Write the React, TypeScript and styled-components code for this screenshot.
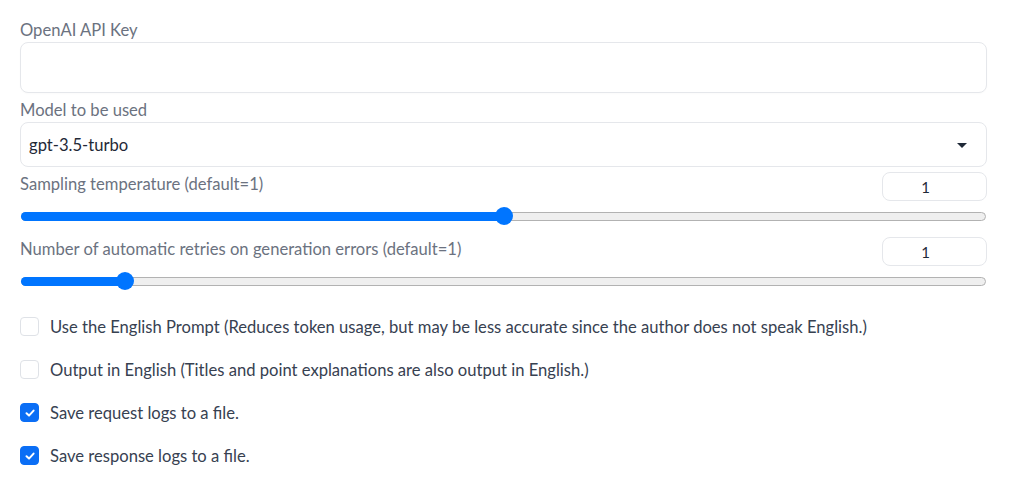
import React from "react";
import styled, { createGlobalStyle } from "styled-components";

const Global = createGlobalStyle`
  html, body { margin: 0; padding: 0; background: #ffffff; }
  body { font-family: "Lato", "Noto Sans", sans-serif; -webkit-font-smoothing: antialiased; }
  * { box-sizing: border-box; }
`;

const Page = styled.div`
  display: flex;
  flex-direction: column;
  padding: 20px 28px 0 20px;
  width: 1015px;
  height: 497px;
  overflow: hidden;
`;

const Field = styled.div<{ $mb?: number }>`
  display: flex;
  flex-direction: column;
  gap: 2px;
  margin-bottom: ${(p) => p.$mb ?? 0}px;
`;

const Label = styled.span`
  font-size: 16.6px;
  line-height: 20px;
  color: #6b7280;
`;

const TextBox = styled.div`
  height: 51px;
  border: 1px solid #e5e7eb;
  border-radius: 8px;
  background: #fff;
  box-shadow: 0 1px 2px rgba(0, 0, 0, 0.02);
`;

const Select = styled.div`
  height: 45px;
  border: 1px solid #e5e7eb;
  border-radius: 8px;
  background: #fff;
  display: flex;
  align-items: center;
  justify-content: space-between;
  padding: 0 19px 0 8px;
  font-size: 16.6px;
  color: #1f2937;
`;

const Caret = styled.span`
  width: 0;
  height: 0;
  border-left: 5px solid transparent;
  border-right: 5px solid transparent;
  border-top: 5px solid #1f2937;
  margin-top: 1px;
`;

const SliderBlock = styled.div<{ $mt: number }>`
  display: flex;
  flex-direction: column;
  margin-top: ${(p) => p.$mt}px;
`;

const SliderHead = styled.div`
  display: flex;
  justify-content: space-between;
  align-items: flex-start;
`;

const SliderLabel = styled(Label)`
  line-height: 24px;
`;

const NumberBox = styled.div`
  width: 105px;
  height: 29px;
  border: 1px solid #e5e7eb;
  border-radius: 8px;
  display: flex;
  align-items: center;
  justify-content: center;
  padding-right: 18px;
  font-size: 15px;
  color: #1f2937;
`;

const TrackArea = styled.div`
  height: 29px;
  display: flex;
  align-items: center;
  padding-left: 1px;
  padding-right: 1px;
`;

const Track = styled.div`
  position: relative;
  flex: 1;
  height: 9px;
  margin-top: 1px;
  border-radius: 5px;
  background: #efefef;
  border: 1px solid #b2b2b2;
`;

const Fill = styled.div`
  position: absolute;
  left: -1px;
  top: -1px;
  bottom: -1px;
  border-radius: 5px;
  background: #0075ff;
`;

const Thumb = styled.div`
  position: absolute;
  top: 50%;
  width: 18px;
  height: 18px;
  margin-top: -9px;
  margin-left: -1px;
  border-radius: 50%;
  background: #0075ff;
`;

const Checks = styled.div`
  display: flex;
  flex-direction: column;
  padding-top: 10px;
`;

const CheckRow = styled.label`
  display: flex;
  align-items: center;
  height: 43px;
  gap: 11px;
  font-size: 16.6px;
  color: #374151;
`;

const Box = styled.span<{ $on: boolean }>`
  width: 19px;
  height: 19px;
  border-radius: 4px;
  flex-shrink: 0;
  display: flex;
  align-items: center;
  justify-content: center;
  background: ${(p) => (p.$on ? "#0b6ef5" : "#ffffff")};
  border: 1px solid ${(p) => (p.$on ? "#0b6ef5" : "#dfe2e7")};
`;

function Slider({ label, value, min, max, mt }: { label: string; value: number; min: number; max: number; mt: number }) {
  const pct = (value - min) / (max - min);
  const pos = `calc(${pct} * (100% - 16px))`;
  return (
    <SliderBlock $mt={mt}>
      <SliderHead>
        <SliderLabel>{label}</SliderLabel>
        <NumberBox>{value}</NumberBox>
      </SliderHead>
      <TrackArea>
        <Track>
          <Fill style={{ width: `calc(${pct} * (100% - 16px) + 9px)` }} />
          <Thumb style={{ left: pos }} />
        </Track>
      </TrackArea>
    </SliderBlock>
  );
}

function Check({ on, children }: { on: boolean; children: React.ReactNode }) {
  return (
    <CheckRow>
      <Box $on={on}>
        {on && (
          <svg width="12" height="12" viewBox="0 0 12 12">
            <path d="M2.5 6.3 L5 8.6 L9.6 3.6" fill="none" stroke="#fff" strokeWidth="2" strokeLinecap="round" strokeLinejoin="round" />
          </svg>
        )}
      </Box>
      <span>{children}</span>
    </CheckRow>
  );
}

export default function App() {
  return (
    <>
      <Global />
      <Page>
        <Field $mb={7}>
          <Label>OpenAI API Key</Label>
          <TextBox />
        </Field>
        <Field>
          <Label>Model to be used</Label>
          <Select>
            <span>gpt-3.5-turbo</span>
            <Caret />
          </Select>
        </Field>
        <Slider label="Sampling temperature (default=1)" value={1} min={0} max={2} mt={5} />
        <Slider label="Number of automatic retries on generation errors (default=1)" value={1} min={0} max={10} mt={7} />
        <Checks>
          <Check on={false}>Use the English Prompt (Reduces token usage, but may be less accurate since the author does not speak English.)</Check>
          <Check on={false}>Output in English (Titles and point explanations are also output in English.)</Check>
          <Check on={true}>Save request logs to a file.</Check>
          <Check on={true}>Save response logs to a file.</Check>
        </Checks>
      </Page>
    </>
  );
}
